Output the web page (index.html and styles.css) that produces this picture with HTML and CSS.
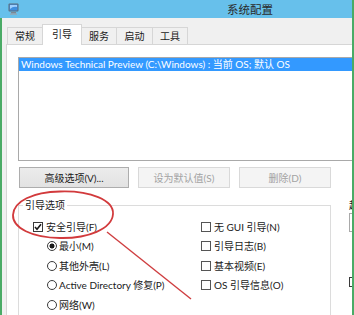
FILE: index.html
```html
<!DOCTYPE html>
<html lang="zh-CN">
<head>
<meta charset="utf-8">
<title>系统配置</title>
<link rel="stylesheet" href="styles.css">
</head>
<body>
<div class="window">
  <div class="titlebar">
    <svg class="title-icon" width="11" height="12" viewBox="0 0 11 12">
      <rect x="0.5" y="0.5" width="10" height="8" rx="1" fill="#5f6b7a"/>
      <rect x="1.5" y="1.5" width="8" height="6" fill="#3f8fe0"/>
      <path d="M2 2 L9 2 L9 4 Q5 3 2 6 Z" fill="#9fd0ff"/>
      <rect x="3" y="9" width="5" height="1.5" fill="#7c8794"/>
      <rect x="2" y="10.5" width="7" height="1.2" fill="#9aa4ae"/>
    </svg>
    <span class="title">系统配置</span>
  </div>
  <div class="client">
    <div class="tabs">
      <div class="tab w36">常规</div>
      <div class="tab w40 active">引导</div>
      <div class="tab w36">服务</div>
      <div class="tab w37">启动</div>
      <div class="tab w36">工具</div>
    </div>
    <div class="panel">
      <div class="listbox">
        <div class="item selected">Windows Technical Preview (C:\Windows) : 当前 OS; 默认 OS</div>
      </div>
      <div class="buttons">
        <div class="btn wide">高级选项(V)...</div>
        <div class="btn disabled">设为默认值(S)</div>
        <div class="btn disabled">删除(D)</div>
      </div>
      <div class="groups">
        <fieldset class="boot">
          <legend>引导选项</legend>
          <div class="opts">
            <div class="col left">
              <div class="row"><span class="cb checked"><svg width="8" height="8" viewBox="0 0 8 8"><path d="M1 4 L3 6.2 L7 1.2" fill="none" stroke="#1a1a1a" stroke-width="1.6"/></svg></span><span>安全引导(F)</span></div>
              <div class="row sub"><span class="rb on"></span><span>最小(M)</span></div>
              <div class="row sub"><span class="rb"></span><span>其他外壳(L)</span></div>
              <div class="row sub"><span class="rb"></span><span>Active Directory 修复(P)</span></div>
              <div class="row sub"><span class="rb"></span><span>网络(W)</span></div>
            </div>
            <div class="col right">
              <div class="row"><span class="cb"></span><span>无 GUI 引导(N)</span></div>
              <div class="row"><span class="cb"></span><span>引导日志(B)</span></div>
              <div class="row"><span class="cb"></span><span>基本视频(E)</span></div>
              <div class="row"><span class="cb"></span><span>OS 引导信息(O)</span></div>
            </div>
          </div>
        </fieldset>
        <div class="timeout">
          <div class="tlabel">超时(T):</div>
          <div class="tbox">30</div>
          <div class="row perm"><span class="cb"></span><span>使所有引导设置成为永久设置(K)</span></div>
        </div>
      </div>
    </div>
  </div>
  <svg class="annot" width="354" height="315" viewBox="0 0 354 315">
    <path d="M60 191.5 C 90 190.5 114 200 113 214 C 112 229 88 238.5 60 238 C 32 237.5 12.5 228 13 215 C 13.5 201 33 192 60 191.5 Z" fill="none" stroke="#d23a3c" stroke-width="1.8"/>
    <line x1="107" y1="232" x2="191" y2="299" stroke="#cf3e40" stroke-width="1.4"/>
  </svg>
</div>
</body>
</html>
```

FILE: styles.css
```css
* { box-sizing: border-box; }
html, body { margin: 0; padding: 0; }
body {
  width: 354px;
  height: 315px;
  overflow: hidden;
  font-family: "Lato", "Noto Sans CJK SC", sans-serif;
  font-size: 10px;
  color: #1a1a1a;
  background: #f0f0f0;
}
.window {
  position: relative;
  width: 354px;
  height: 315px;
  display: flex;
  flex-direction: column;
}
.titlebar {
  flex: none;
  height: 18px;
  background: #67c0eb;
  display: flex;
  align-items: center;
  border-right: 2px solid #4aab66;
}
.title-icon { margin-left: 8px; flex: none; }
.title {
  margin-left: 208px;
  font-family: "Noto Sans CJK SC", sans-serif;
  font-size: 11.5px;
  line-height: 14px;
  color: #2a2a2a;
}
.client {
  flex: 1;
  min-height: 0;
  border-left: 2px solid #4aab66;
  border-right: 2px solid #4aab66;
  background: #f0f0f0;
  overflow: hidden;
  display: flex;
  flex-direction: column;
}
.tabs {
  flex: none;
  height: 26px;
  display: flex;
  align-items: flex-end;
  padding-left: 5px;
}
.tab {
  height: 17px;
  border: 1px solid #d6d6d6;
  border-bottom: none;
  margin-right: -1px;
  display: flex;
  align-items: center;
  justify-content: center;
  background: #f0f0f0;
  font-family: "Noto Sans CJK SC", sans-serif;
  font-size: 10px;
  line-height: 12px;
  color: #1a1a1a;
}
.w36 { width: 36px; }
.w37 { width: 37px; }
.w40 { width: 40px; }
.tab.active {
  height: 21px;
  margin-bottom: -1px;
  background: #fff;
  position: relative;
  z-index: 1;
  padding-bottom: 3px;
}
.panel {
  flex: 1;
  width: 620px;
  margin-left: 4px;
  border-left: 1px solid #d6d6d6;
  border-top: 1px solid #d6d6d6;
  background: #fff;
  padding: 12px 0 0 11px;
}
.listbox {
  width: 440px;
  height: 104px;
  border: 1px solid #a9a9a9;
  background: #fff;
}
.item {
  height: 13px;
  line-height: 13px;
  padding-left: 2px;
  white-space: nowrap;
}
.item.selected { background: #3399ff; color: #fff; }
.buttons {
  display: flex;
  gap: 9px;
  margin-top: 6px;
  padding-left: 1px;
}
.btn {
  width: 92px;
  height: 21px;
  border: 1px solid #adadad;
  background: linear-gradient(#ececec, #e2e2e2);
  display: flex;
  align-items: center;
  justify-content: center;
  line-height: 12px;
  color: #1a1a1a;
}
.btn.wide { width: 110px; }
.btn.disabled {
  border-color: #d9d9d9;
  background: #f4f4f4;
  color: #a3a3a3;
}
.groups {
  display: flex;
  gap: 18px;
  margin-top: 11px;
}
fieldset.boot {
  flex: none;
  width: 313px;
  height: 140px;
  margin: 0;
  min-width: 0;
  border: 1px solid #dcdcdc;
  padding: 0 0 0 4px;
}
legend {
  padding: 0 2px;
  line-height: 13px;
  color: #1a1a1a;
}
.opts {
  display: flex;
  margin-left: 10px;
  padding-top: 5px;
}
.col.left { width: 168px; }
.row {
  height: 19.5px;
  display: flex;
  align-items: center;
  gap: 3px;
  white-space: nowrap;
  line-height: 12px;
}
.row.sub { padding-left: 14px; gap: 2px; }
.cb {
  width: 10px;
  height: 10px;
  border: 1px solid #3a3a3a;
  background: #fff;
  flex: none;
  display: flex;
  align-items: center;
  justify-content: center;
}
.right .cb { border-color: #555; }
.rb {
  width: 10px;
  height: 10px;
  border: 1px solid #3a3a3a;
  border-radius: 50%;
  background: #fff;
  flex: none;
}
.rb.on { background: radial-gradient(circle, #1a1a1a 0 2.2px, #fff 2.8px); }
.timeout {
  flex: none;
  width: 200px;
  display: flex;
  flex-direction: column;
}
.tlabel { line-height: 13px; }
.tbox {
  margin-top: 1px;
  width: 40px;
  height: 19px;
  border: 1px solid #a9a9a9;
  padding-left: 3px;
  line-height: 17px;
}
.row.perm { margin-top: 40px; }
.annot {
  position: absolute;
  left: 0;
  top: 0;
  pointer-events: none;
}
```
